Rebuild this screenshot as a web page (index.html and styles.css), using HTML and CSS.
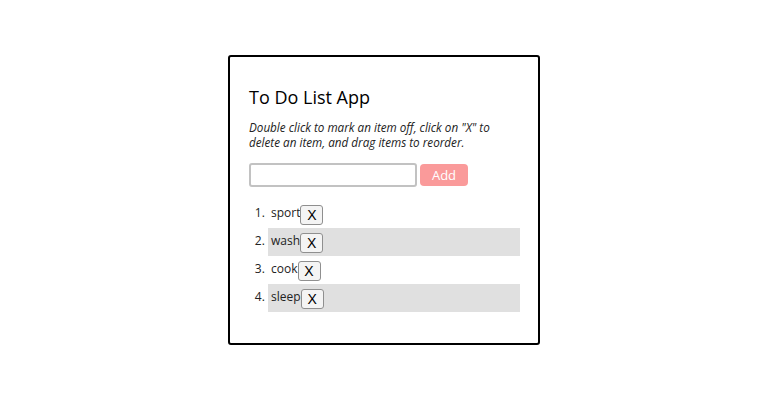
FILE: index.html
```html
<!DOCTYPE html>
<html>
<head>
<meta charset="utf-8">
<link rel="stylesheet" href="styles.css">
</head>
<body>
<div class="card">
  <h1 class="title">To Do List App</h1>
  <p class="hint">Double click to mark an item off, click on "X" to delete an item, and drag items to reorder.</p>
  <div class="form">
    <input class="field" type="text">
    <button class="add">Add</button>
  </div>
  <ol class="list">
    <li class="item">sport<button class="del">X</button></li>
    <li class="item">wash<button class="del">X</button></li>
    <li class="item">cook<button class="del">X</button></li>
    <li class="item">sleep<button class="del">X</button></li>
  </ol>
</div>
</body>
</html>
```
FILE: styles.css
```css
html, body {
  margin: 0;
  padding: 0;
  background: #fff;
}
body {
  height: 400px;
  display: flex;
  align-items: center;
  justify-content: center;
  font-family: "Open Sans", sans-serif;
  color: #222;
}
.card {
  box-sizing: border-box;
  width: 312px;
  height: 290px;
  border: 2px solid #000;
  border-radius: 3px;
  padding: 28px 18px 0 19px;
}
.title {
  margin: 0;
  font-size: 18px;
  font-weight: 500;
  line-height: 24px;
  color: #000;
}
.hint {
  margin: 11px 0 0;
  font-size: 11.7px;
  font-style: italic;
  line-height: 15px;
  color: #222;
}
.form {
  display: flex;
  align-items: center;
  margin-top: 13px;
}
.field {
  box-sizing: border-box;
  width: 168px;
  height: 24px;
  border: 2px solid #c2c2c2;
  border-radius: 3px;
  margin: 0;
  padding: 0 4px;
}
.add {
  box-sizing: border-box;
  width: 48px;
  height: 22px;
  margin-left: 3px;
  border: none;
  border-radius: 4px;
  background: #fa9a9a;
  color: #fff;
  font-family: "Open Sans", sans-serif;
  font-size: 13px;
  font-weight: 500;
  padding: 0;
}
.list {
  margin: 13px 0 0;
  padding-left: 19px;
  font-size: 12px;
}
.item {
  box-sizing: border-box;
  height: 28px;
  line-height: 25px;
  padding-left: 3px;
}
.item:nth-child(even) {
  background: #e0e0e0;
}
.del {
  box-sizing: border-box;
  width: 23px;
  height: 20px;
  margin-top: 5px;
  padding: 0;
  border: 1px solid #8f8f8f;
  border-radius: 3px;
  background: #f4f4f4;
  font-family: "Liberation Sans", Arial, sans-serif;
  font-size: 14px;
  line-height: 18px;
  color: #000;
  vertical-align: top;
}
```
